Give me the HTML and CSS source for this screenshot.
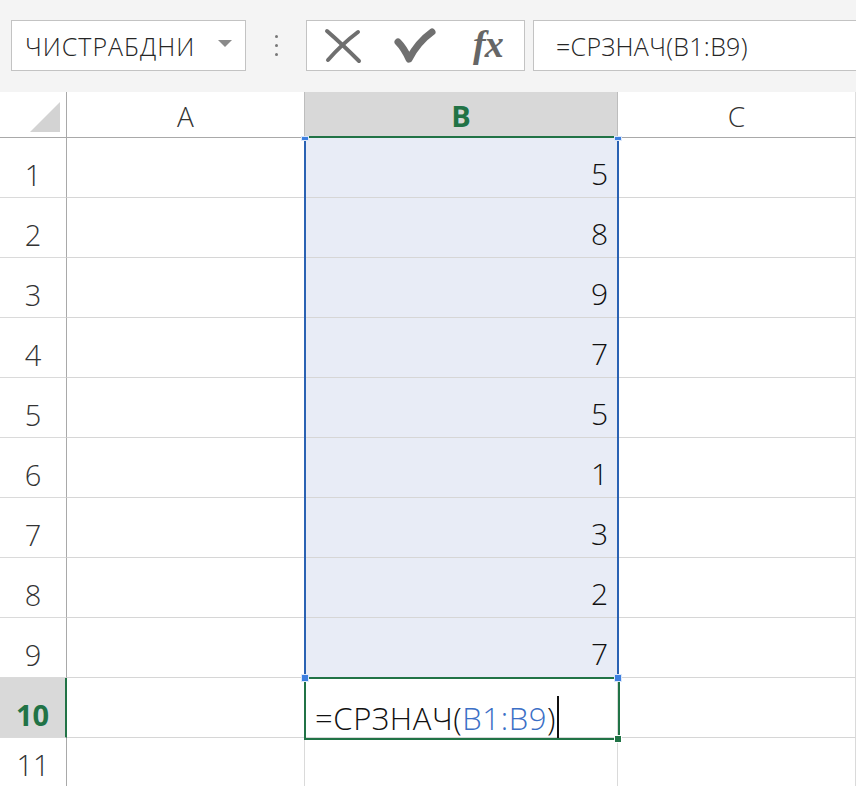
FILE: index.html
```html
<!DOCTYPE html>
<html lang="ru">
<head>
<meta charset="utf-8">
<title>СРЗНАЧ</title>
<link rel="stylesheet" href="styles.css">
</head>
<body>
<div class="toolbar">
  <div class="namebox"><span class="name">ЧИСТРАБДНИ</span><span class="caret"></span></div>
  <div class="dots"><i></i><i></i><i></i></div>
  <div class="btns">
    <span class="btn">
      <svg width="38" height="36" viewBox="0 0 38 36"><path d="M3 3 Q18 16 35 33" fill="none" stroke="#6f6f6f" stroke-width="4" stroke-linecap="round"/><path d="M34 4 Q18 16 4 32" fill="none" stroke="#6f6f6f" stroke-width="4" stroke-linecap="round"/></svg>
    </span>
    <span class="btn">
      <svg width="42" height="36" viewBox="0 0 42 36"><path d="M4 14 Q10 20 15 31 Q24 14 38 4" fill="none" stroke="#707070" stroke-width="7" stroke-linecap="round" stroke-linejoin="round"/></svg>
    </span>
    <span class="btn fx">fx</span>
  </div>
  <div class="formula">=СРЗНАЧ(B1:B9)</div>
</div>
<div class="sheet">
  <div class="corner"><span class="tri"></span></div>
  <div class="ch">A</div>
  <div class="ch chsel">B</div>
  <div class="ch">C</div>

  <div class="rh">1</div><div class="c"></div><div class="c b">5</div><div class="c"></div>
  <div class="rh">2</div><div class="c"></div><div class="c b">8</div><div class="c"></div>
  <div class="rh">3</div><div class="c"></div><div class="c b">9</div><div class="c"></div>
  <div class="rh">4</div><div class="c"></div><div class="c b">7</div><div class="c"></div>
  <div class="rh">5</div><div class="c"></div><div class="c b">5</div><div class="c"></div>
  <div class="rh">6</div><div class="c"></div><div class="c b">1</div><div class="c"></div>
  <div class="rh">7</div><div class="c"></div><div class="c b">3</div><div class="c"></div>
  <div class="rh">8</div><div class="c"></div><div class="c b">2</div><div class="c"></div>
  <div class="rh">9</div><div class="c"></div><div class="c b">7</div><div class="c"></div>
  <div class="rh rhsel">10</div><div class="c"></div><div class="c edit">=СРЗНАЧ(<span class="ref">B1:B9</span>)<span class="cursor"></span></div><div class="c"></div>
  <div class="rh">11</div><div class="c"></div><div class="c"></div><div class="c"></div>

  <div class="sel"></div>
  <div class="active"></div>
  <span class="h h-tl"></span>
  <span class="h h-tr"></span>
  <span class="h h-bl"></span>
  <span class="h h-br"></span>
  <span class="fill"></span>
</div>
</body>
</html>
```
FILE: styles.css
```css
html, body {
  margin: 0;
  padding: 0;
}
body {
  width: 856px;
  height: 786px;
  overflow: hidden;
  background: #ffffff;
  font-family: "Open Sans", "Noto Sans", "DejaVu Sans", sans-serif;
  font-weight: 300;
  color: #222;
}
.toolbar {
  height: 92px;
  box-sizing: border-box;
  background: #f4f4f4;
  display: flex;
  align-items: flex-start;
  padding: 20px 0 0 11px;
}
.namebox {
  width: 235px;
  height: 51px;
  box-sizing: border-box;
  border: 1px solid #c3c3c3;
  background: #fff;
  display: flex;
  align-items: center;
  justify-content: space-between;
  padding: 0 13px 0 13px;
}
.name {
  font-size: 25px;
  letter-spacing: 1px;
  color: #262626;
}
.caret {
  width: 0;
  height: 0;
  border-left: 7px solid transparent;
  border-right: 7px solid transparent;
  border-top: 7px solid #8a8a8a;
  margin-bottom: 4px;
}
.dots {
  width: 60px;
  height: 51px;
  display: flex;
  flex-direction: column;
  align-items: center;
  justify-content: center;
  gap: 6px;
}
.dots i {
  display: block;
  width: 3px;
  height: 3px;
  border-radius: 50%;
  background: #777;
}
.btns {
  width: 219px;
  height: 51px;
  box-sizing: border-box;
  border: 1px solid #c3c3c3;
  background: #fff;
  display: grid;
  grid-template-columns: repeat(3, 1fr);
  align-items: center;
  justify-items: center;
}
.btn {
  display: flex;
  align-items: center;
  justify-content: center;
}
.btn svg {
  display: block;
}
.fx {
  font-family: "Liberation Serif", "DejaVu Serif", serif;
  font-style: italic;
  font-weight: 700;
  font-size: 38px;
  color: #666;
  line-height: 1;
  margin-top: -4px;
  letter-spacing: -1px;
}
.formula {
  flex: 1;
  margin-left: 8px;
  margin-right: -2px;
  height: 51px;
  box-sizing: border-box;
  border: 1px solid #c3c3c3;
  background: #fff;
  display: flex;
  align-items: center;
  padding-left: 22px;
  font-size: 25px;
  letter-spacing: 0.3px;
  color: #262626;
}
.sheet {
  position: relative;
  display: grid;
  grid-template-columns: 67px 238px 313px 238px;
  grid-template-rows: 46px repeat(10, 60px) 50px;
}
.corner {
  box-sizing: border-box;
  border-right: 1px solid #a9a9a9;
  border-bottom: 1px solid #a9a9a9;
  display: flex;
  justify-content: flex-end;
  align-items: flex-end;
  padding: 0 6px 5px 0;
}
.tri {
  width: 0;
  height: 0;
  border-left: 30px solid transparent;
  border-bottom: 30px solid #d3d3d3;
}
.ch {
  box-sizing: border-box;
  border-right: 1px solid #dedede;
  border-bottom: 1px solid #a9a9a9;
  display: flex;
  align-items: center;
  justify-content: center;
  font-size: 28px;
  color: #333;
  padding-top: 2px;
}
.chsel {
  background: #d8d8d8;
  border-bottom: 2px solid #217346;
  border-right: 1px solid #bdbdbd;
  border-left: 1px solid #bdbdbd;
  margin-left: -1px;
  color: #217346;
  font-weight: 700;
  font-size: 29px;
}
.rh {
  box-sizing: border-box;
  border-right: 1px solid #a9a9a9;
  border-bottom: 1px solid #dadada;
  display: flex;
  align-items: flex-end;
  justify-content: center;
  font-size: 29px;
  line-height: 1;
  color: #333;
  padding-bottom: 8px;
}
.rhsel {
  background: #d9d9d9;
  border-right: 2px solid #217346;
  color: #217346;
  font-weight: 700;
}
.c {
  box-sizing: border-box;
  border-right: 1px solid #dadada;
  border-bottom: 1px solid #d6d6d6;
  display: flex;
  align-items: flex-end;
  justify-content: flex-end;
  font-size: 30px;
  line-height: 1;
  color: #111;
  padding: 0 9px 8px 0;
}
.b {
  background: #e8ecf6;
}
.edit {
  justify-content: flex-start;
  padding: 0 0 3px 10px;
  font-size: 31px;
  color: #111;
  letter-spacing: 0.6px;
}
.ref {
  color: #3b6fc6;
}
.cursor {
  display: inline-block;
  width: 1.5px;
  height: 44px;
  background: #111;
  margin-left: 1px;
  margin-bottom: -6px;
}
.sel {
  position: absolute;
  left: 304px;
  top: 47px;
  width: 315px;
  height: 539px;
  box-sizing: border-box;
  border-left: 2px solid #2a62b3;
  border-right: 2px solid #2a62b3;
}
.active {
  position: absolute;
  left: 304px;
  top: 585px;
  width: 316px;
  height: 63px;
  box-sizing: border-box;
  border: 2px solid #217346;
}
.h {
  position: absolute;
  width: 8px;
  height: 8px;
  background: #3d7fe0;
  border: 1px solid #dce8fa;
  box-sizing: border-box;
}
.h-tl { left: 301px; top: 44px; height: 5px; }
.h-tr { left: 614px; top: 44px; height: 5px; }
.h-bl { left: 301px; top: 582px; }
.h-br { left: 614px; top: 582px; }
.fill {
  position: absolute;
  left: 614px;
  top: 643px;
  width: 8px;
  height: 8px;
  background: #217346;
  border: 1px solid #fff;
  box-sizing: border-box;
}
```
